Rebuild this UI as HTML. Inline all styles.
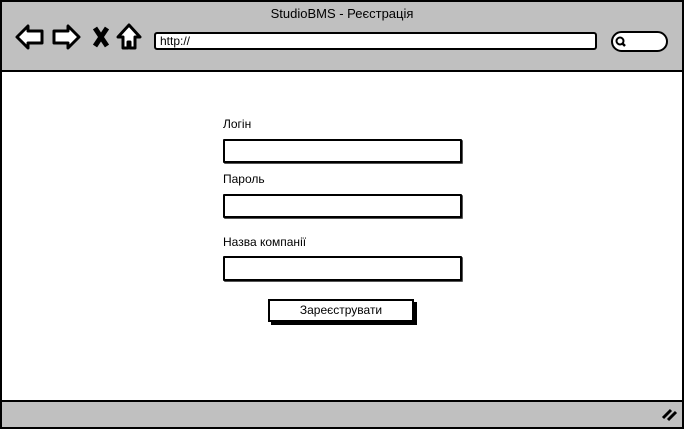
<!DOCTYPE html>
<html><head><meta charset="utf-8"><style>
html,body{margin:0;padding:0;}
body{width:684px;height:429px;position:relative;overflow:hidden;background:#fff;font-family:"Liberation Sans",sans-serif;color:#000;}
.abs{position:absolute;box-sizing:border-box;}
.inp{border:2px solid #000;border-radius:1px;background:#fff;box-shadow:1px 1px 0 #555;}
.lbl{font-size:12px;}
</style></head><body>
<div class="abs" style="left:0;top:0;width:684px;height:429px;border:2px solid #000;"></div>
<div class="abs" style="left:2px;top:2px;width:680px;height:70px;background:#c0c0c0;border-bottom:2px solid #000;"></div>
<div class="abs" style="left:0;top:6px;width:684px;text-align:center;font-size:13px;">StudioBMS - Реєстрація</div>
<svg class="abs" style="left:0;top:0" width="160" height="72">
<g fill="#fff" stroke="#000" stroke-width="3" stroke-linejoin="round">
<path d="M17 37 L28 26 L28 31 L42 31 L42 43 L28 43 L28 48 Z"/>
<path d="M79 37 L68 26 L68 31 L54 31 L54 43 L68 43 L68 48 Z"/>
<path d="M129 25 L140 37 L135 37 L135 48 L130 48 L130 42 L128 42 L128 48 L123 48 L123 37 L118 37 Z"/>
</g>
<path d="M95 28 L107 46 M107 28 L95 46" stroke="#000" stroke-width="5"/>
</svg>
<div class="abs" style="left:154px;top:32px;width:443px;height:18px;border:2px solid #000;border-radius:3px;background:#fff;font-size:12px;padding-left:4px;line-height:14px;">http://</div>
<div class="abs" style="left:611px;top:31px;width:57px;height:21px;border:2px solid #000;border-radius:11px;background:#fff;"></div>
<svg class="abs" style="left:614px;top:35px" width="16" height="14"><circle cx="6" cy="6" r="3.5" fill="none" stroke="#000" stroke-width="2"/><path d="M8.5 8.5 L11 11" stroke="#000" stroke-width="2.5"/></svg>
<div class="abs" style="left:2px;top:400px;width:680px;height:27px;background:#c0c0c0;border-top:2px solid #000;"></div>
<svg class="abs" style="left:660px;top:406px" width="20" height="16"><path d="M3 12 L11 4 M8 14 L16 6" stroke="#000" stroke-width="3"/></svg>
<div class="abs lbl" style="left:223px;top:117px;">Логін</div>
<div class="abs inp" style="left:223px;top:139px;width:239px;height:24px;"></div>
<div class="abs lbl" style="left:223px;top:172px;">Пароль</div>
<div class="abs inp" style="left:223px;top:194px;width:239px;height:24px;"></div>
<div class="abs lbl" style="left:223px;top:235px;">Назва компанії</div>
<div class="abs inp" style="left:223px;top:256px;width:239px;height:25px;"></div>
<div class="abs" style="left:268px;top:299px;width:146px;height:23px;border:2px solid #000;background:#fff;box-shadow:3px 3px 0 #000;text-align:center;font-size:12px;line-height:19px;">Зареєструвати</div>
</body></html>
